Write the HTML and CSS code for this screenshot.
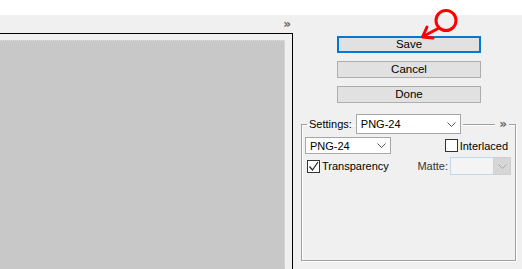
FILE: index.html
```html
<!DOCTYPE html>
<html lang="en">
<head>
  <meta charset="UTF-8" />
  <meta name="viewport" content="width=device-width, initial-scale=1.0"/>
  <title>Save for Web</title>
  <link rel="stylesheet" href="styles.css">
</head>
<body>
  <div class="topstrip"></div>

  <div class="app">
    <div class="preview-col">
      <div class="preview-head"><span class="more">&raquo;</span></div>
      <div class="preview-frame">
        <div class="preview-canvas"></div>
      </div>
    </div>

    <div class="side">
      <div class="actions">
        <button class="btn btn-default">Save</button>
        <button class="btn">Cancel</button>
        <button class="btn">Done</button>
      </div>

      <fieldset class="settings">
        <legend>
          <span class="legend-label">Settings:</span>
          <div class="select select-preset">
            <span>PNG-24</span>
            <svg class="chev" width="9" height="5" viewBox="0 0 9 5"><polyline points="0.5,0.5 4.5,4.5 8.5,0.5" /></svg>
          </div>
        </legend>
        <span class="settings-more">&raquo;</span>

        <div class="row">
          <div class="select select-format">
            <span>PNG-24</span>
            <svg class="chev" width="9" height="5" viewBox="0 0 9 5"><polyline points="0.5,0.5 4.5,4.5 8.5,0.5" /></svg>
          </div>
          <label class="check">
            <span class="box"></span>
            <span>Interlaced</span>
          </label>
        </div>

        <div class="row row-2">
          <label class="check">
            <span class="box">
              <svg width="11" height="11" viewBox="0 0 11 11"><polyline points="1.5,5.5 4.5,9 10,1" /></svg>
            </span>
            <span>Transparency</span>
          </label>
          <div class="matte">
            <span class="matte-label">Matte:</span>
            <div class="select-disabled">
              <span class="swatch"></span>
              <span class="arrow">
                <svg class="chev" width="9" height="5" viewBox="0 0 9 5"><polyline points="0.5,0.5 4.5,4.5 8.5,0.5" /></svg>
              </span>
            </div>
          </div>
        </div>
      </fieldset>
    </div>
  </div>

  <!-- red annotation drawn over the dialog -->
  <svg class="annotation" width="60" height="45" viewBox="410 5 60 45">
    <circle cx="446" cy="20.5" r="10" />
    <line x1="439" y1="28" x2="423" y2="36.5" />
    <polyline points="427,27 422.5,37 433,38" />
  </svg>
</body>
</html>
```

FILE: styles.css
```css
body {
  margin: 0;
  background: #ffffff;
  font-family: 'Liberation Sans', Arial, sans-serif;
  font-size: 11px;
  color: #000;
  position: relative;
  overflow: hidden;
}

.topstrip {
  height: 15px;
  background: #ffffff;
}

.app {
  display: flex;
  height: 254px;
  background: #f0f0f0;
}

.preview-col {
  width: 293px;
  display: flex;
  flex-direction: column;
}

.preview-head {
  height: 18px;
  display: flex;
  justify-content: flex-end;
  align-items: center;
  padding-right: 3px;
}

.more,
.settings-more {
  font-family: 'DejaVu Sans', sans-serif;
  font-size: 12px;
  font-weight: bold;
  line-height: 12px;
  color: #666;
  letter-spacing: -1px;
}

.preview-frame {
  flex: 1;
  border-top: 1px solid #000;
  border-right: 1px solid #000;
  padding: 6px 7px 0 0;
}

.preview-canvas {
  height: 100%;
  background: #c8c8c8;
  border-top: 1px dotted #dedede;
  border-right: 1px dotted #dedede;
}

.side {
  flex: 1;
  display: flex;
  flex-direction: column;
}

.actions {
  display: flex;
  flex-direction: column;
  gap: 8px;
  padding: 21px 0 0 44px;
}

.btn {
  width: 144px;
  height: 17px;
  padding: 0;
  font-family: inherit;
  font-size: 11.5px;
  line-height: 15px;
  background: #e1e1e1;
  border: 1px solid #adadad;
  color: #000;
}

.btn-default {
  border: 2px solid #0078d7;
  line-height: 13px;
}

.settings {
  position: relative;
  margin: 11px 0 0 8px;
  width: 215px;
  height: 147px;
  box-sizing: border-box;
  padding: 3px 3px 0 3px;
  border: 1px solid #a0a0a0;
  box-shadow: inset 1px 1px 0 #fff, 1px 1px 0 #fff;
}

.settings legend {
  display: flex;
  align-items: center;
  gap: 4px;
  padding: 0 2px;
  margin-left: 2px;
}

.settings-more {
  position: absolute;
  top: -16px;
  right: 6px;
  padding: 0 3px 0 4px;
  background: #f0f0f0;
}

.select {
  display: flex;
  align-items: center;
  justify-content: space-between;
  box-sizing: border-box;
  background: #fff;
  border: 1px solid #a6a6a6;
  padding: 0 4px 0 4px;
  font-size: 11px;
}

.select-preset {
  width: 105px;
  height: 20px;
}

.select-format {
  width: 86px;
  height: 17px;
}

.chev polyline {
  fill: none;
  stroke: #555;
  stroke-width: 1;
}

.row {
  display: flex;
  align-items: center;
  justify-content: space-between;
  height: 17px;
}

.row-2 {
  margin-top: 3px;
  height: 18px;
}

.check {
  display: flex;
  align-items: center;
  gap: 2px;
  padding-right: 4px;
}

.row-2 .check {
  padding-left: 2px;
}

.box {
  width: 13px;
  height: 13px;
  box-sizing: border-box;
  border: 1px solid #333;
  background: #fff;
  display: flex;
  align-items: center;
  justify-content: center;
}

.box polyline {
  fill: none;
  stroke: #222;
  stroke-width: 1.2;
}

.matte {
  display: flex;
  align-items: center;
  gap: 2px;
  padding-right: 1px;
}

.matte-label {
  color: #333;
}

.select-disabled {
  display: flex;
  height: 18px;
  width: 61px;
}

.swatch {
  flex: 1;
  background: #f4f4f4;
  border: 1px solid #c0d8ee;
}

.arrow {
  width: 16px;
  background: #d6d6d6;
  border: 1px solid #cfcfcf;
  border-left: none;
  display: flex;
  align-items: center;
  justify-content: center;
}

.arrow .chev polyline {
  stroke: #a8a8a8;
}

.annotation {
  position: absolute;
  left: 410px;
  top: 5px;
}

.annotation circle,
.annotation line,
.annotation polyline {
  fill: none;
  stroke: #ff0000;
  stroke-width: 3;
  stroke-linecap: round;
  stroke-linejoin: round;
}
```
